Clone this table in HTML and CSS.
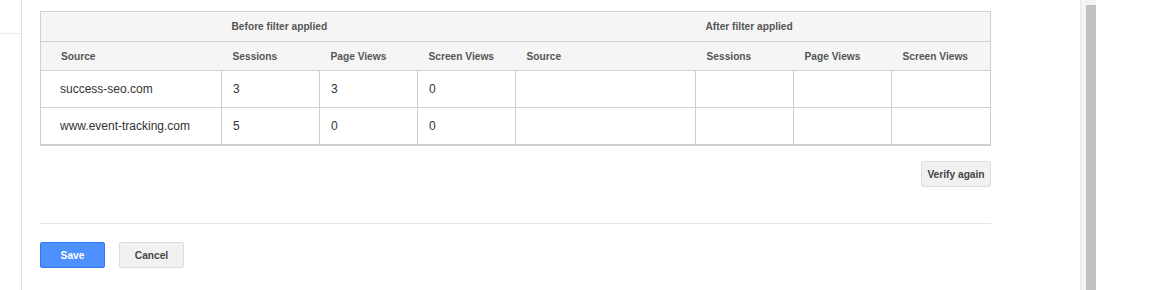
FILE: index.html
```html
<!DOCTYPE html>
<html lang="en">
<head>
<meta charset="utf-8">
<title>Filter verification</title>
<link rel="stylesheet" href="styles.css">
</head>
<body>
<div class="page">
  <aside class="rail"><div class="rail-top"></div></aside>
  <main class="main">
    <div class="content">
      <table class="verify-table">
        <colgroup>
          <col class="c-source"><col class="c-num"><col class="c-num"><col class="c-num">
          <col class="c-source2"><col class="c-num"><col class="c-num"><col class="c-last">
        </colgroup>
        <thead>
          <tr class="group-row">
            <th></th>
            <th colspan="3">Before filter applied</th>
            <th></th>
            <th colspan="3">After filter applied</th>
          </tr>
          <tr class="col-row">
            <th class="first">Source</th>
            <th>Sessions</th>
            <th>Page Views</th>
            <th>Screen Views</th>
            <th>Source</th>
            <th>Sessions</th>
            <th>Page Views</th>
            <th>Screen Views</th>
          </tr>
        </thead>
        <tbody>
          <tr>
            <td class="first">success-seo.com</td>
            <td>3</td><td>3</td><td>0</td>
            <td></td><td></td><td></td><td></td>
          </tr>
          <tr>
            <td class="first">www.event-tracking.com</td>
            <td>5</td><td>0</td><td>0</td>
            <td></td><td></td><td></td><td></td>
          </tr>
        </tbody>
      </table>
      <div class="verify-row">
        <button class="btn btn-verify" type="button">Verify again</button>
      </div>
      <div class="divider"></div>
      <div class="form-actions">
        <button class="btn btn-primary" type="button">Save</button>
        <button class="btn" type="button">Cancel</button>
      </div>
    </div>
  </main>
  <div class="scrollbar"><div class="scroll-thumb"></div></div>
</div>
</body>
</html>
```

FILE: styles.css
```css
html, body {
  margin: 0;
  padding: 0;
  background: #fff;
  height: 100%;
  overflow: hidden;
}

body {
  font-family: "Liberation Sans", Arial, sans-serif;
  color: #333;
}

.page {
  display: flex;
  height: 290px;
}

/* left navigation edge */
.rail {
  width: 21px;
  flex: none;
  border-right: 1px solid #e0e0e0;
}

.rail-top {
  margin-top: 33px;
  border-top: 1px solid #ececec;
}

.main {
  flex: 1;
}

.content {
  width: 951px;
  margin-left: 18px;
  padding-top: 11px;
}

/* verification table */
.verify-table {
  width: 951px;
  table-layout: fixed;
  border-collapse: collapse;
  border: 1px solid #cfcfcf;
  border-bottom: 2px solid #cfcfcf;
}

.c-source { width: 181px; }
.c-source2 { width: 180px; }
.c-num { width: 98px; }
.c-last { width: 99px; }

.verify-table th {
  background: #f5f5f5;
  font-size: 10.2px;
  font-weight: bold;
  color: #555;
  text-align: left;
  padding: 0 0 0 11px;
  border-bottom: 1px solid #cfcfcf;
}

.group-row th {
  height: 29px;
  padding-left: 10px;
}

.col-row th {
  height: 28px;
}

.verify-table th.first {
  padding-left: 20px;
}

.verify-table td {
  height: 36px;
  padding: 0 0 0 11px;
  font-size: 12px;
  color: #333;
  border: 1px solid #cfcfcf;
}

.verify-table td.first {
  padding-left: 19px;
}

.verify-row {
  display: flex;
  justify-content: flex-end;
  margin-top: 15px;
}

.divider {
  margin-top: 36px;
  border-top: 1px solid #e5e5e5;
}

.form-actions {
  display: flex;
  gap: 14px;
  margin-top: 18px;
}

/* buttons */
.btn {
  box-sizing: border-box;
  height: 26px;
  min-width: 65px;
  padding: 0 8px;
  font-family: "Liberation Sans", Arial, sans-serif;
  font-size: 10.2px;
  font-weight: bold;
  color: #444;
  background: #f1f1f1;
  border: 1px solid #dcdcdc;
  border-radius: 2px;
  cursor: pointer;
}

.btn-verify {
  width: 70px;
  padding: 0 4px;
}

.btn-primary {
  color: #fff;
  background: #4d90fe;
  border-color: #3079ed;
}

/* window scrollbar */
.scrollbar {
  width: 15px;
  flex: none;
  margin-right: 65px;
  background: #f4f4f4;
  border-left: 1px solid #e8e8e8;
  display: flex;
  justify-content: flex-end;
}

.scroll-thumb {
  width: 10px;
  margin-top: 5px;
  background: #c2c2c2;
}
```
